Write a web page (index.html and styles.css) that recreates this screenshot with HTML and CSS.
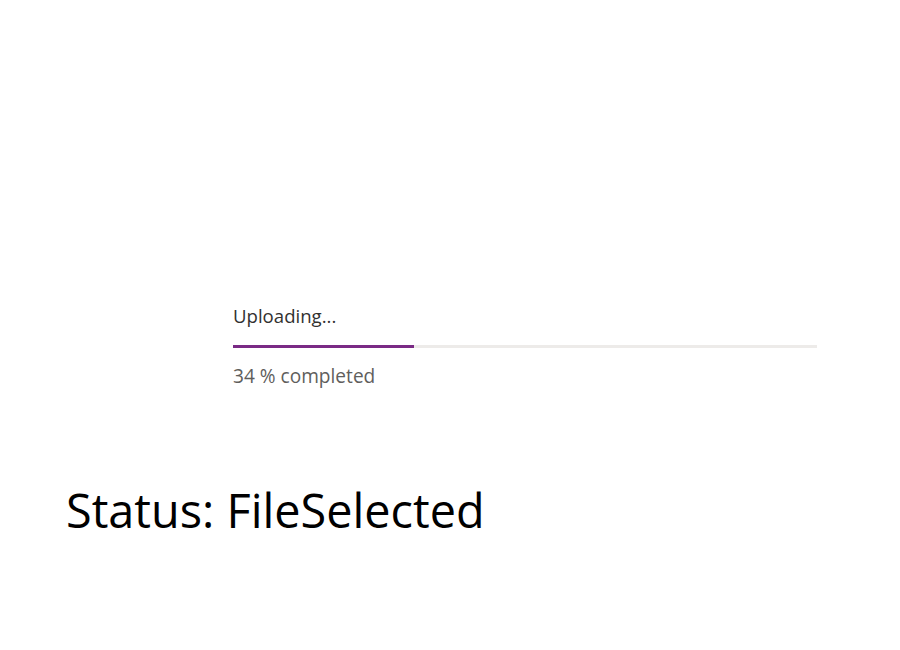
FILE: index.html
```html
<!DOCTYPE html>
<html>
<head>
<meta charset="utf-8">
<link rel="stylesheet" href="styles.css">
</head>
<body>
<div class="page">
  <div class="progress">
    <div class="progress-name">Uploading...</div>
    <div class="progress-track-wrap">
      <div class="progress-track">
        <div class="progress-bar" style="width: 31%"></div>
      </div>
    </div>
    <div class="progress-desc">34 % completed</div>
  </div>
  <h1 class="status">Status: FileSelected</h1>
</div>
</body>
</html>
```

FILE: styles.css
```css
html, body {
  margin: 0;
  padding: 0;
  background: #ffffff;
}
body {
  font-family: "Open Sans", "Noto Sans", sans-serif;
}
.page {
  padding: 303px 0 0 66px;
}
.progress {
  margin-left: 167px;
  width: 584px;
}
.progress-name {
  font-size: 18.6px;
  line-height: 26px;
  color: #323130;
}
.progress-track-wrap {
  padding: 16px 0 15px;
}
.progress-track {
  height: 3px;
  background: #edebe9;
}
.progress-bar {
  height: 3px;
  background: #7a2a85;
}
.progress-desc {
  font-size: 19.1px;
  line-height: 26px;
  color: #605e5c;
}
.status {
  margin: 89px 0 0;
  font-size: 46.8px;
  font-weight: 400;
  line-height: 64px;
  color: #000000;
}
```
